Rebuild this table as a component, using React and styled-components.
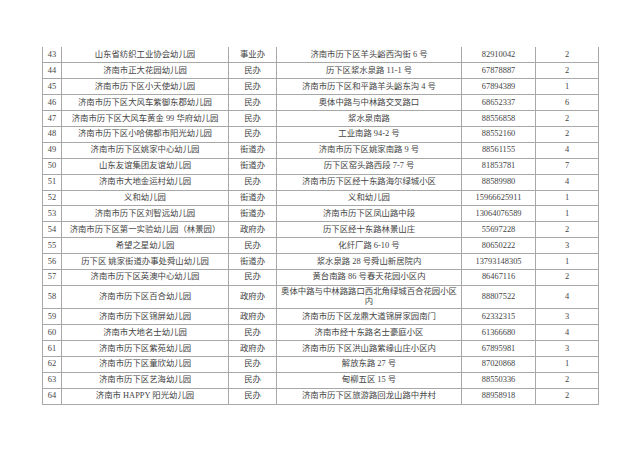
import React from 'react';
import styled, { createGlobalStyle } from 'styled-components';

const GlobalStyle = createGlobalStyle`
  html, body {
    margin: 0;
    padding: 0;
    background: #ffffff;
  }
`;

const Page = styled.div`
  width: 640px;
  height: 453px;
  padding: 47px 0 0 42px;
  box-sizing: border-box;
  background: #fff;
  overflow: hidden;
`;

const Table = styled.table`
  width: 556px;
  table-layout: fixed;
  border-collapse: collapse;
  font-family: "Liberation Serif", "Noto Sans CJK SC", serif;
  font-size: 8.4px;
  color: #444;
`;

const Col = styled.col`
  width: ${(p) => p.$w}px;
`;

const Row = styled.tr`
  height: ${(p) => (p.$tall ? '23.5px' : '15.9px')};
`;

const Cell = styled.td`
  border: 1px solid #a8a8a8;
  border-top: ${(p) => (p.$first ? 'none' : '1px solid #a8a8a8')};
  padding: 0 2px;
  text-align: center;
  vertical-align: middle;
  line-height: 10px;
  white-space: nowrap;
  overflow: hidden;
`;

const widths = [19, 167, 48, 185, 74, 63];

const rows = [
  [43, '山东省纺织工业协会幼儿园', '事业办', '济南市历下区羊头峪西沟街 6 号', '82910042', 2],
  [44, '济南市正大花园幼儿园', '民办', '历下区浆水泉路 11-1 号', '67878887', 2],
  [45, '济南市历下区小天使幼儿园', '民办', '济南市历下区和平路羊头峪东沟 4 号', '67894389', 1],
  [46, '济南市历下区大风车紫御东郡幼儿园', '民办', '奥体中路与中林路交叉路口', '68652337', 6],
  [47, '济南市历下区大风车黄金 99 华府幼儿园', '民办', '浆水泉南路', '88556858', 2],
  [48, '济南市历下区小哈佛都市阳光幼儿园', '民办', '工业南路 94-2 号', '88552160', 2],
  [49, '济南市历下区姚家中心幼儿园', '街道办', '济南市历下区姚家南路 9 号', '88561155', 4],
  [50, '山东友谊集团友谊幼儿园', '街道办', '历下区窑头路西段 7-7 号', '81853781', 7],
  [51, '济南市大地金运村幼儿园', '民办', '济南市历下区经十东路海尔绿城小区', '88589980', 4],
  [52, '义和幼儿园', '街道办', '义和幼儿园', '15966625911', 1],
  [53, '济南市历下区刘智远幼儿园', '街道办', '济南市历下区凤山路中段', '13064076589', 1],
  [54, '济南市历下区第一实验幼儿园（林景园）', '政府办', '历下区经十东路林景山庄', '55697228', 2],
  [55, '希望之星幼儿园', '民办', '化纤厂路 6-10 号', '80650222', 3],
  [56, '历下区 姚家街道办事处舜山幼儿园', '街道办', '浆水泉路 28 号舜山新居院内', '13793148305', 1],
  [57, '济南市历下区英澳中心幼儿园', '民办', '黄台南路 86 号春天花园小区内', '86467116', 2],
  [58, '济南市历下区百合幼儿园', '政府办', ['奥体中路与中林路路口西北角绿城百合花园小区', '内'], '88807522', 4],
  [59, '济南市历下区锦屏幼儿园', '政府办', '济南市历下区龙鼎大道锦屏家园南门', '62332315', 3],
  [60, '济南市大地名士幼儿园', '民办', '济南市经十东路名士豪庭小区', '61366680', 4],
  [61, '济南市历下区紫苑幼儿园', '政府办', '济南市历下区洪山路紫缘山庄小区内', '67895981', 3],
  [62, '济南市历下区童欣幼儿园', '民办', '解放东路 27 号', '87020868', 1],
  [63, '济南市历下区艺海幼儿园', '民办', '甸柳五区 15 号', '88550336', 2],
  [64, '济南市 HAPPY 阳光幼儿园', '民办', '济南市历下区旅游路回龙山路中井村', '88958918', 2],
];

export default function App() {
  return (
    <Page>
      <GlobalStyle />
      <Table>
        <colgroup>
          {widths.map((w, i) => (
            <Col key={i} $w={w} />
          ))}
        </colgroup>
        <tbody>
          {rows.map(([no, name, kind, addr, phone, count], i) => {
            const first = i === 0;
            const tall = Array.isArray(addr);
            return (
              <Row key={no} $tall={tall}>
                <Cell $first={first}>{no}</Cell>
                <Cell $first={first}>{name}</Cell>
                <Cell $first={first}>{kind}</Cell>
                <Cell $first={first}>
                  {tall ? (
                    <>
                      {addr[0]}
                      <br />
                      {addr[1]}
                    </>
                  ) : (
                    addr
                  )}
                </Cell>
                <Cell $first={first}>{phone}</Cell>
                <Cell $first={first}>{count}</Cell>
              </Row>
            );
          })}
        </tbody>
      </Table>
    </Page>
  );
}
